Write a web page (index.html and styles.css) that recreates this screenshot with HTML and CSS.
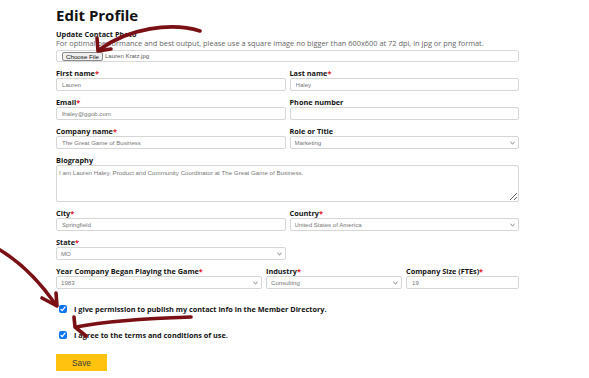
FILE: index.html
```html
<!DOCTYPE html>
<html lang="en">
<head>
<meta charset="utf-8">
<title>Edit Profile</title>
<link rel="stylesheet" href="styles.css">
</head>
<body>
<main class="page">
  <h1 class="title">Edit Profile</h1>

  <div class="photo">
    <div class="lbl">Update Contact Photo</div>
    <p class="hint">For optimal performance and best output, please use a square image no bigger than 600x600 at 72 dpi, in jpg or png format.</p>
    <div class="file"><span class="file-btn">Choose File</span><span class="file-name">Lauren Kratz.jpg</span></div>
  </div>

  <div class="row two">
    <div class="field"><div class="lbl">First name<span class="req">*</span></div><input class="ctl" value="Lauren"></div>
    <div class="field"><div class="lbl">Last name<span class="req">*</span></div><input class="ctl" value="Haley"></div>
  </div>
  <div class="row two">
    <div class="field"><div class="lbl">Email<span class="req">*</span></div><input class="ctl" value="lhaley@ggob.com"></div>
    <div class="field"><div class="lbl">Phone number</div><input class="ctl" value=""></div>
  </div>
  <div class="row two">
    <div class="field"><div class="lbl">Company name<span class="req">*</span></div><input class="ctl" value="The Great Game of Business"></div>
    <div class="field"><div class="lbl">Role or Title</div>
      <div class="sel"><select class="ctl"><option>Marketing</option></select><svg class="chev" viewBox="0 0 6 4" width="5" height="4"><path d="M0.6 0.8 L3 3 L5.4 0.8" fill="none" stroke="#444" stroke-width="0.9"/></svg></div>
    </div>
  </div>
  <div class="field">
    <div class="lbl">Biography</div>
    <textarea class="ctl area">I am Lauren Haley, Product and Community Coordinator at The Great Game of Business.</textarea>
  </div>
  <div class="row two">
    <div class="field"><div class="lbl">City<span class="req">*</span></div><input class="ctl" value="Springfield"></div>
    <div class="field"><div class="lbl">Country<span class="req">*</span></div>
      <div class="sel"><select class="ctl"><option>United States of America</option></select><svg class="chev" viewBox="0 0 6 4" width="5" height="4"><path d="M0.6 0.8 L3 3 L5.4 0.8" fill="none" stroke="#444" stroke-width="0.9"/></svg></div>
    </div>
  </div>
  <div class="row two">
    <div class="field"><div class="lbl">State<span class="req">*</span></div>
      <div class="sel"><select class="ctl"><option>MO</option></select><svg class="chev" viewBox="0 0 6 4" width="5" height="4"><path d="M0.6 0.8 L3 3 L5.4 0.8" fill="none" stroke="#444" stroke-width="0.9"/></svg></div>
    </div>
    <div></div>
  </div>
  <div class="row three">
    <div class="field"><div class="lbl">Year Company Began Playing the Game<span class="req">*</span></div>
      <div class="sel"><select class="ctl"><option>1983</option></select><svg class="chev" viewBox="0 0 6 4" width="5" height="4"><path d="M0.6 0.8 L3 3 L5.4 0.8" fill="none" stroke="#444" stroke-width="0.9"/></svg></div>
    </div>
    <div class="field"><div class="lbl">Industry<span class="req">*</span></div>
      <div class="sel"><select class="ctl"><option>Consulting</option></select><svg class="chev" viewBox="0 0 6 4" width="5" height="4"><path d="M0.6 0.8 L3 3 L5.4 0.8" fill="none" stroke="#444" stroke-width="0.9"/></svg></div>
    </div>
    <div class="field"><div class="lbl">Company Size (FTEs)<span class="req">*</span></div><input class="ctl" value="19"></div>
  </div>

  <div class="checks">
    <label class="check"><input type="checkbox" checked><span>I give permission to publish my contact info in the Member Directory.</span></label>
    <label class="check"><input type="checkbox" checked><span>I agree to the terms and conditions of use.</span></label>
  </div>

  <button class="save" type="button">Save</button>
</main>

<svg class="arrows" width="589" height="378" viewBox="0 0 589 378">
  <g fill="none" stroke="#7a1014" stroke-width="3.6" stroke-linecap="round" stroke-linejoin="round">
    <path d="M200 31 C172 22 128 28 99 50"/>
    <path d="M97 38 L98 51 L111 49"/>
    <path d="M0 250 C20 262 40 282 56 305"/>
    <path d="M42 298 L57 306 L56 293"/>
    <path d="M191 317 C160 318 112 320 76 327"/>
    <path d="M74 317 L75 327 L86 336"/>
  </g>
</svg>
</body>
</html>
```

FILE: styles.css
```css
* { box-sizing: border-box; }
html, body { margin: 0; padding: 0; background: #fff; }
body { width: 589px; height: 378px; overflow: hidden; position: relative; }

.page {
  margin-left: 56px;
  width: 463px;
  padding-top: 6px;
  display: flex;
  flex-direction: column;
  gap: 7px;
  font-family: "Open Sans", "DejaVu Sans", sans-serif;
  color: #141414;
}

.title {
  margin: 0 0 -1px;
  font-size: 15px;
  line-height: 18px;
  font-weight: 700;
  color: #111;
}

.lbl {
  font-size: 7.3px;
  line-height: 9px;
  font-weight: 700;
  white-space: nowrap;
}
.req { color: #e0101a; }

.photo { display: flex; flex-direction: column; }
.hint {
  margin: 0 0 2px;
  font-size: 7.4px;
  line-height: 9px;
  color: #666;
  white-space: nowrap;
}
.file {
  height: 12px;
  border: 1px solid #d9d9d9;
  border-radius: 2px;
  display: flex;
  align-items: center;
  padding-left: 5px;
  gap: 2px;
  font-family: "Liberation Sans", Arial, sans-serif;
  font-size: 6px;
}
.file-btn {
  height: 9px;
  padding: 0 3px;
  display: flex;
  align-items: center;
  background: #efefef;
  border: 1px solid #8a8a8a;
  border-radius: 2px;
  color: #111;
  font-size: 6.2px;
}
.file-name { color: #555; }

.row { display: grid; gap: 4px; }
.two { grid-template-columns: 1fr 1fr; }
.three { grid-template-columns: 206px 136px 113px; }

.field { display: flex; flex-direction: column; min-width: 0; }

.ctl {
  display: block;
  width: 100%;
  height: 13px;
  margin: 0;
  padding: 0 5px;
  border: 1px solid #d6d6d6;
  border-radius: 2px;
  background: #fff;
  font-family: "Liberation Sans", Arial, sans-serif;
  font-size: 6.1px;
  color: #777;
  outline: none;
}
select.ctl { appearance: none; -webkit-appearance: none; padding-left: 4px; }
.sel { position: relative; }
.chev { position: absolute; right: 4px; top: 5px; }

.area {
  height: 37px;
  padding: 3px 2px;
  line-height: 7px;
  font-size: 6.2px;
  resize: vertical;
}

.checks {
  margin-top: 8px;
  display: flex;
  flex-direction: column;
  gap: 16px;
}
.check {
  display: flex;
  align-items: center;
  gap: 7px;
  height: 10px;
  padding-left: 3px;
  font-size: 7.3px;
  line-height: 10px;
  font-weight: 700;
  color: #141414;
}
.check input {
  width: 8px;
  height: 8px;
  margin: 0;
  accent-color: #0a74f0;
}

.save {
  margin-top: 7px;
  width: 51px;
  height: 17px;
  border: none;
  border-radius: 0;
  background: #ffc30f;
  font-family: "Liberation Sans", Arial, sans-serif;
  font-size: 8.3px;
  color: #3a3a3a;
  padding: 0;
}

.arrows {
  position: absolute;
  left: 0;
  top: 0;
  pointer-events: none;
}
```
